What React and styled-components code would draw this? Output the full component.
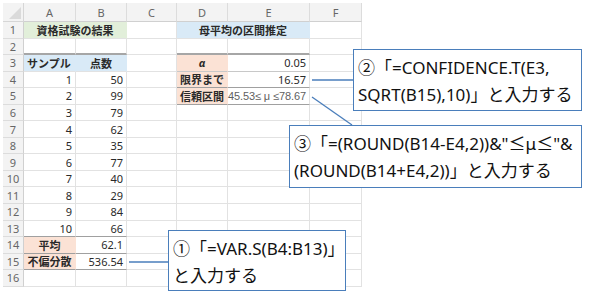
import React from "react";
import styled, { createGlobalStyle, css } from "styled-components";

const Global = createGlobalStyle`
  html, body { margin: 0; padding: 0; background: #fff; }
  body { width: 590px; height: 295px; overflow: hidden; }
`;

const Page = styled.div`
  position: relative;
  width: 590px;
  height: 295px;
  padding: 3px 0 0 3px;
  box-sizing: border-box;
  font-family: "Noto Sans", "Noto Sans CJK JP", sans-serif;
`;

const Sheet = styled.div`
  display: grid;
  grid-template-columns: 21px 52px 51px 50px 51px 82px 52px;
  grid-template-rows: 19px repeat(16, 16.56px);
  width: max-content;
`;

const Corner = styled.div`
  background: #f3f3f3;
  border-right: 1px solid #d6d6d6;
  border-bottom: 1px solid #d6d6d6;
  box-sizing: border-box;
  position: relative;
  overflow: hidden;
  &::after {
    content: "";
    position: absolute;
    right: 2px;
    bottom: 2px;
    border-style: solid;
    border-width: 0 0 12px 12px;
    border-color: transparent transparent #dadada transparent;
  }
`;

const ColHead = styled.div`
  background: #f3f3f3;
  color: #666;
  font-size: 11px;
  display: flex;
  align-items: center;
  justify-content: center;
  border-right: 1px solid #dcdcdc;
  border-bottom: 1px solid #d0d0d0;
  box-sizing: border-box;
`;

const RowHead = styled.div`
  background: #f3f3f3;
  color: #666;
  font-size: 11px;
  display: flex;
  align-items: center;
  justify-content: center;
  border-right: 1px solid #d0d0d0;
  border-bottom: 1px solid #dcdcdc;
  box-sizing: border-box;
`;

const Cell = styled.div`
  grid-column: span ${(p) => p.$span || 1};
  background: ${(p) => p.$bg || "#fff"};
  color: ${(p) => p.$color || "#2a2a2a"};
  font-size: 11px;
  font-weight: ${(p) => (p.$bold ? 700 : 400)};
  font-style: ${(p) => (p.$italic ? "italic" : "normal")};
  display: flex;
  align-items: center;
  justify-content: ${(p) =>
    p.$align === "left" ? "flex-start" : p.$align === "center" ? "center" : "flex-end"};
  padding: 0 3px;
  box-sizing: border-box;
  white-space: nowrap;
  border-right: 1px solid ${(p) => (p.$bg ? p.$bg : "#e2e2e2")};
  border-bottom: 1px solid #e2e2e2;
  ${(p) =>
    p.$bottom === "thick" &&
    css`
      border-bottom: 2px solid #a6a6a6;
    `}
  ${(p) =>
    p.$bottom === "line" &&
    css`
      border-bottom: 1px solid #a0a0a0;
    `}
  ${(p) =>
    p.$bottom === "soft" &&
    css`
      border-bottom: 1px solid #c8c8c8;
    `}
`;

const Interval = styled.span`
  font-family: "Liberation Sans", "Noto Sans", sans-serif;
  font-size: 11px;
  letter-spacing: -0.1px;
`;

const GREEN = "#e2efda";
const BLUE = "#d9eaf7";
const PEACH = "#fbe2d5";

const scores = [50, 99, 79, 62, 35, 77, 40, 29, 84, 66];

function buildRows() {
  const rows = [];
  for (let r = 1; r <= 16; r++) {
    const cells = [];
    const key = (c) => `${r}-${c}`;
    if (r === 1) {
      cells.push(<Cell key={key("A")} $span={2} $bg={GREEN} $bold $align="center">資格試験の結果</Cell>);
      cells.push(<Cell key={key("C")} />);
      cells.push(<Cell key={key("D")} $span={2} $bg={BLUE} $bold $align="center">母平均の区間推定</Cell>);
      cells.push(<Cell key={key("F")} />);
    } else if (r === 2) {
      cells.push(<Cell key={key("A")} $bottom="thick" />);
      cells.push(<Cell key={key("B")} $bottom="thick" />);
      cells.push(<Cell key={key("C")} />);
      cells.push(<Cell key={key("D")} $bottom="thick" />);
      cells.push(<Cell key={key("E")} $bottom="thick" />);
      cells.push(<Cell key={key("F")} />);
    } else {
      if (r === 3) {
        cells.push(<Cell key={key("A")} $bg={BLUE} $bold $align="left">サンプル</Cell>);
        cells.push(<Cell key={key("B")} $bg={BLUE} $bold $align="center">点数</Cell>);
      } else if (r >= 4 && r <= 13) {
        const b = r === 13 ? "line" : undefined;
        cells.push(<Cell key={key("A")} $bottom={b}>{r - 3}</Cell>);
        cells.push(<Cell key={key("B")} $bottom={b}>{scores[r - 4]}</Cell>);
      } else if (r === 14) {
        cells.push(<Cell key={key("A")} $bg={PEACH} $bold $align="center" $bottom="line">平均</Cell>);
        cells.push(<Cell key={key("B")} $bottom="line">62.1</Cell>);
      } else if (r === 15) {
        cells.push(<Cell key={key("A")} $bg={PEACH} $bold $align="center" $bottom="line">不偏分散</Cell>);
        cells.push(<Cell key={key("B")} $bottom="line">536.54</Cell>);
      } else {
        cells.push(<Cell key={key("A")} />);
        cells.push(<Cell key={key("B")} />);
      }
      cells.push(<Cell key={key("C")} />);
      if (r === 3) {
        cells.push(<Cell key={key("D")} $bg={PEACH} $bold $italic $align="center" $bottom="soft">α</Cell>);
        cells.push(<Cell key={key("E")} $bottom="soft">0.05</Cell>);
      } else if (r === 4) {
        cells.push(<Cell key={key("D")} $bg={PEACH} $bold $align="left" $bottom="line">限界まで</Cell>);
        cells.push(<Cell key={key("E")} $bottom="line">16.57</Cell>);
      } else if (r === 5) {
        cells.push(<Cell key={key("D")} $bg={PEACH} $bold $align="left" $bottom="line">信頼区間</Cell>);
        cells.push(
          <Cell key={key("E")} $bottom="line" $color="#5f5f5f">
            <Interval>45.53≤ μ ≤78.67</Interval>
          </Cell>
        );
      } else {
        cells.push(<Cell key={key("D")} />);
        cells.push(<Cell key={key("E")} />);
      }
      cells.push(<Cell key={key("F")} />);
    }
    rows.push(
      <React.Fragment key={r}>
        <RowHead>{r}</RowHead>
        {cells}
      </React.Fragment>
    );
  }
  return rows;
}

const Callout = styled.div`
  position: absolute;
  left: ${(p) => p.$x}px;
  top: ${(p) => p.$y}px;
  width: ${(p) => p.$w}px;
  height: ${(p) => p.$h}px;
  box-sizing: border-box;
  border: 1.5px solid #4a7ebb;
  background: #fff;
  padding: 4px 4px 0 4px;
  font-family: "Noto Sans", "Noto Sans CJK JP", sans-serif;
  font-size: 17px;
  line-height: 27px;
  color: #111;
  white-space: nowrap;
`;

const Lines = styled.svg`
  position: absolute;
  left: 0;
  top: 0;
  pointer-events: none;
`;

export default function App() {
  return (
    <>
      <Global />
      <Page>
        <Sheet>
          <Corner />
          {["A", "B", "C", "D", "E", "F"].map((c) => (
            <ColHead key={c}>{c}</ColHead>
          ))}
          {buildRows()}
        </Sheet>
        <Lines width="590" height="295">
          <line x1="129" y1="262" x2="168" y2="262" stroke="#4a7ebb" strokeWidth="1.3" />
          <line x1="312" y1="80" x2="353" y2="80" stroke="#4a7ebb" strokeWidth="1.3" />
          <line x1="312" y1="97" x2="352" y2="125" stroke="#4a7ebb" strokeWidth="1.3" />
        </Lines>
        <Callout $x={353} $y={49} $w={229} $h={62}>
          ②「=CONFIDENCE.T(E3,
          <br />
          SQRT(B15),10)」と入力する
        </Callout>
        <Callout $x={289} $y={125} $w={293} $h={63}>
          ③「=(ROUND(B14-E4,2))&amp;"≤μ≤"&amp;
          <br />
          (ROUND(B14+E4,2))」と入力する
        </Callout>
        <Callout $x={168} $y={230} $w={178} $h={61}>
          ①「=VAR.S(B4:B13)」
          <br />
          と入力する
        </Callout>
      </Page>
    </>
  );
}
